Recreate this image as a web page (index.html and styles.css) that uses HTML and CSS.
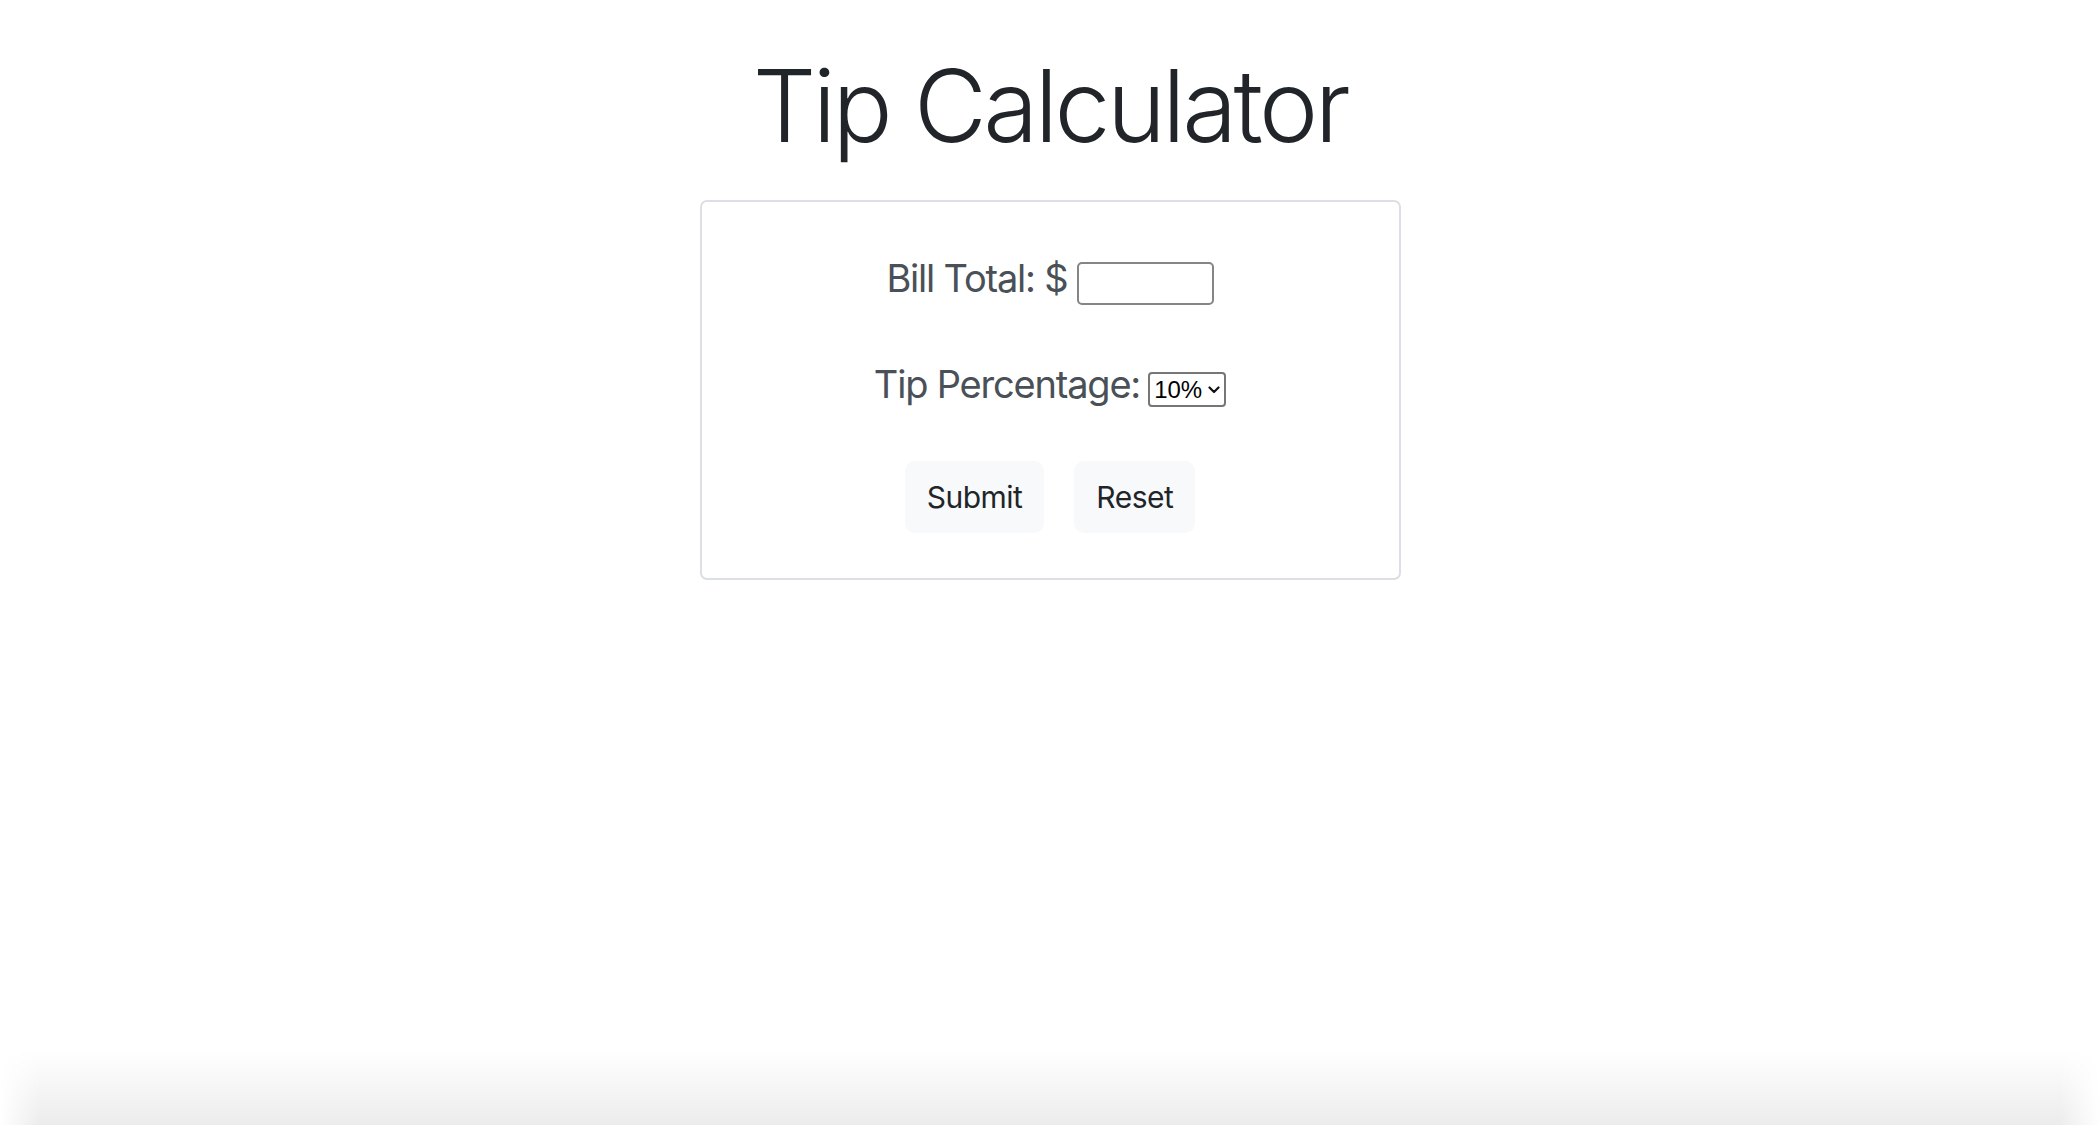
FILE: index.html
```html
<!DOCTYPE html>
<html lang="en">
<head>
<meta charset="utf-8">
<title>Tip Calculator</title>
<link rel="stylesheet" href="styles.css">
</head>
<body>
<main class="page">
  <h1 class="title">Tip Calculator</h1>
  <form class="card">
    <div class="row">
      <label class="label" for="bill">Bill Total: $</label>
      <input class="bill-input" id="bill" type="text">
    </div>
    <div class="row row-tip">
      <label class="label" for="tip">Tip Percentage:</label>
      <span class="select-wrap">
        <select class="tip-select" id="tip">
          <option>10%</option>
          <option>15%</option>
          <option>20%</option>
        </select>
        <svg class="chevron" viewBox="0 0 12 8" width="12" height="8" aria-hidden="true"><path d="M1.5 1.5 L6 6 L10.5 1.5" fill="none" stroke="#111" stroke-width="2.2" stroke-linecap="round" stroke-linejoin="round"/></svg>
      </span>
    </div>
    <div class="buttons">
      <button class="btn" type="button">Submit</button>
      <button class="btn" type="reset">Reset</button>
    </div>
  </form>
</main>
<div class="bottom-shade"></div>
</body>
</html>
```
FILE: styles.css
```css
html, body {
  margin: 0;
  padding: 0;
  background: #ffffff;
}
body {
  font-family: Inter, "Noto Sans", "Liberation Sans", sans-serif;
  color: #212529;
  min-height: 1125px;
}
.page {
  display: flex;
  flex-direction: column;
  align-items: center;
}
.title {
  margin: 43px 0 32px 0;
  font-size: 100px;
  font-weight: 300;
  line-height: 125px;
  letter-spacing: -3.5px;
  color: #212529;
}
.card {
  box-sizing: border-box;
  width: 701px;
  height: 380px;
  border: 2px solid #dcdfe3;
  border-radius: 7px;
  padding: 52px 0 0 0;
  display: flex;
  flex-direction: column;
  align-items: center;
}
.row {
  display: flex;
  align-items: baseline;
  justify-content: center;
  gap: 9px;
}
.row-tip {
  margin-top: 55px;
  gap: 8px;
}
.label {
  font-size: 38px;
  line-height: 48px;
  color: #495057;
  letter-spacing: -1.2px;
}
.bill-input {
  box-sizing: border-box;
  width: 137px;
  height: 43px;
  border: 2px solid #858585;
  border-radius: 5px;
  font-family: "Liberation Sans", Arial, sans-serif;
  font-size: 26px;
  padding: 0 6px;
  background: #fff;
  outline: none;
}
.select-wrap {
  position: relative;
  display: inline-block;
}
.tip-select {
  box-sizing: border-box;
  -webkit-appearance: none;
  appearance: none;
  width: 78px;
  height: 35px;
  border: 2px solid #767676;
  border-radius: 4px;
  background: #fff;
  color: #000;
  font-family: "Liberation Sans", Arial, sans-serif;
  font-size: 24px;
  padding: 0 0 0 4px;
  outline: none;
}
.chevron {
  position: absolute;
  right: 6px;
  top: 14px;
  pointer-events: none;
}
.buttons {
  display: flex;
  gap: 30px;
  margin-top: 53px;
}
.btn {
  box-sizing: border-box;
  height: 72px;
  padding: 0 22px;
  border: none;
  border-radius: 10px;
  background: #f8f9fa;
  color: #212529;
  font-family: Inter, "Noto Sans", "Liberation Sans", sans-serif;
  font-size: 30px;
  letter-spacing: -0.5px;
  line-height: 72px;
  cursor: pointer;
}
.bottom-shade {
  position: fixed;
  left: 0;
  right: 0;
  bottom: 0;
  height: 75px;
  pointer-events: none;
  background: linear-gradient(to bottom, rgba(0, 0, 0, 0), rgba(0, 0, 0, 0.075));
  -webkit-mask-image: linear-gradient(to right, transparent, #000 40px, #000 calc(100% - 40px), transparent);
  mask-image: linear-gradient(to right, transparent, #000 40px, #000 calc(100% - 40px), transparent);
}
```
